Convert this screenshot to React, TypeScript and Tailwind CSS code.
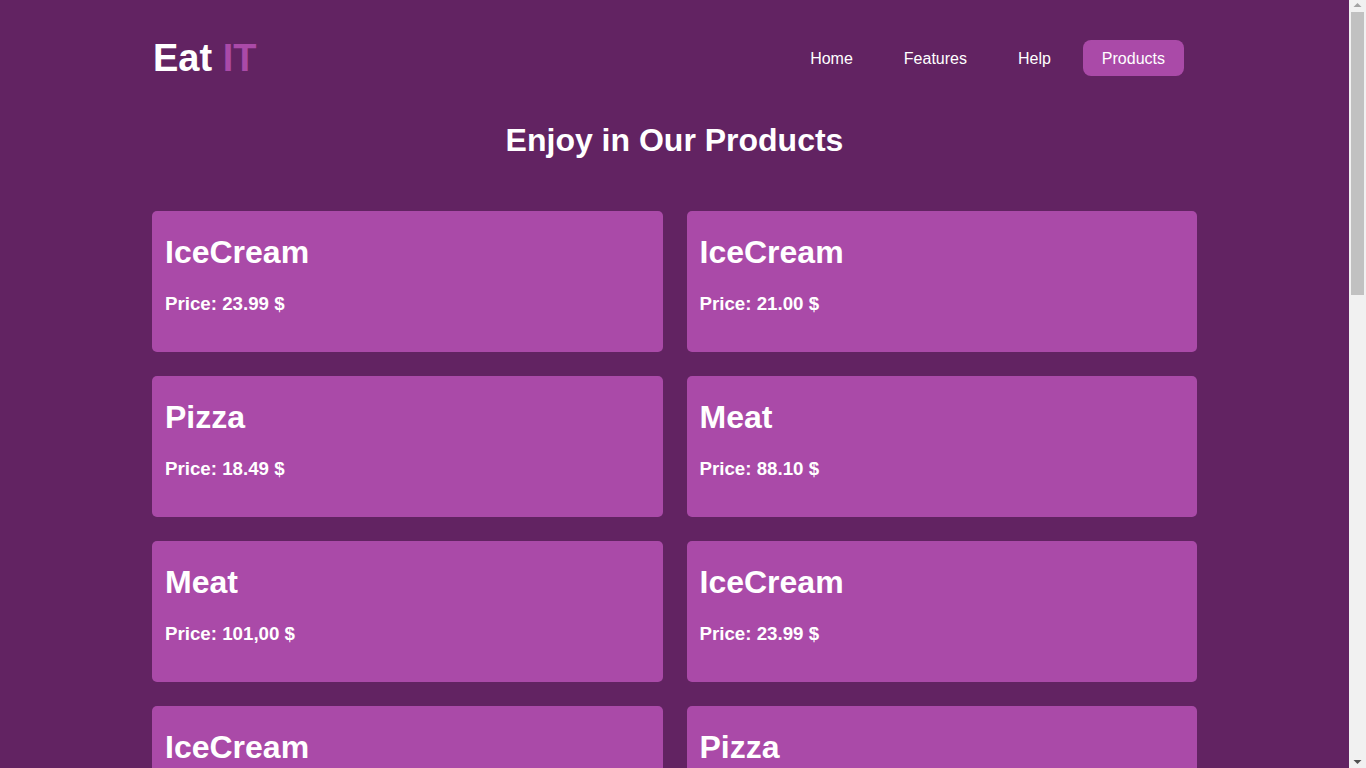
import React from "react";

type Product = { name: string; price: string };

const products: Product[] = [
  { name: "IceCream", price: "23.99" },
  { name: "IceCream", price: "21.00" },
  { name: "Pizza", price: "18.49" },
  { name: "Meat", price: "88.10" },
  { name: "Meat", price: "101,00" },
  { name: "IceCream", price: "23.99" },
  { name: "IceCream", price: "15.50" },
  { name: "Pizza", price: "22.00" },
  { name: "Meat", price: "64.20" },
  { name: "Pizza", price: "19.99" },
  { name: "IceCream", price: "12.75" },
  { name: "Meat", price: "92.40" },
  { name: "Pizza", price: "24.30" },
  { name: "IceCream", price: "18.00" },
  { name: "Meat", price: "77.80" },
  { name: "Pizza", price: "16.90" },
  { name: "IceCream", price: "20.10" },
  { name: "Meat", price: "85.00" },
  { name: "Pizza", price: "21.45" },
  { name: "IceCream", price: "14.99" },
];

const links = ["Home", "Features", "Help", "Products"];

function ProductCard({ product }: { product: Product }) {
  return (
    <div className="h-[141px] rounded-[5px] bg-[#aa4aa8] px-[13px] pt-[23px] text-white">
      <h1 className="text-[32px] font-bold leading-[37px]">{product.name}</h1>
      <h3 className="mt-[22px] text-[18.72px] font-bold leading-[22px]">
        Price: {product.price} $
      </h3>
    </div>
  );
}

// page scrollbar, as the reference shows it
function Scrollbar() {
  return (
    <div className="flex w-[17px] shrink-0 flex-col items-center bg-[#f1f1f1]">
      <svg width="9" height="12" viewBox="0 0 9 12" className="shrink-0">
        <path d="M0.5 7 L4.5 3 L8.5 7 Z" fill="#a3a3a3" />
      </svg>
      <div className="h-[283px] w-[13px] shrink-0 bg-[#c1c1c1]" />
      <div className="flex-1" />
      <svg width="9" height="12" viewBox="0 0 9 12" className="shrink-0">
        <path d="M0.5 4 L4.5 8 L8.5 4 Z" fill="#505050" />
      </svg>
    </div>
  );
}

export default function App() {
  return (
    <div className="flex h-screen bg-[#622362] font-['Liberation_Sans',Arial,sans-serif] text-white">
      <div className="flex-1 overflow-y-auto">
        <div className="mx-auto w-[1045px] pb-[155px]">
          <header className="flex items-start justify-between">
            <div className="ml-[1px] mt-[36px] text-[38px] font-bold leading-[44px]">
              Eat <span className="text-[#aa4aa8]">IT</span>
            </div>
            <nav className="mr-[13px] mt-[40px] flex gap-[13px]">
              {links.map((l) => (
                <a
                  key={l}
                  className={
                    "rounded-lg px-[19px] pt-[10px] pb-[8px] text-[16px] leading-[18px] " +
                    (l === "Products" ? "bg-[#aa4aa8]" : "")
                  }
                >
                  {l}
                </a>
              ))}
            </nav>
          </header>

          <h2 className="mt-[42px] text-center text-[32px] font-bold leading-[37px]">
            Enjoy in Our Products
          </h2>

          <div className="mt-[52px] grid grid-cols-2 gap-x-[24px] gap-y-[24px]">
            {products.map((p, i) => (
              <ProductCard key={i} product={p} />
            ))}
          </div>
        </div>
      </div>
      <Scrollbar />
    </div>
  );
}
